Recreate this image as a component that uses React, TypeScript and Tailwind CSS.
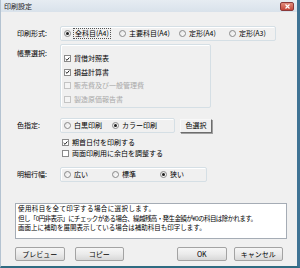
import React from "react";

type Opt = { label: string; w?: string; checked?: boolean; focus?: boolean };

function Radio({ checked }: { checked?: boolean }) {
  return (
    <span className="flex h-[7px] w-[7px] shrink-0 items-center justify-center rounded-full border border-[#8a8a8a] bg-gradient-to-br from-[#e4e4e4] to-white">
      {checked && <span className="h-[3px] w-[3px] rounded-full bg-[#1e1e1e]" />}
    </span>
  );
}

function Check({ checked, disabled }: { checked?: boolean; disabled?: boolean }) {
  return (
    <span
      className={
        "flex h-[7px] w-[7px] shrink-0 items-center justify-center border " +
        (disabled ? "border-[#c4c4c4] bg-[#f4f4f4]" : "border-[#8a8a8a] bg-white")
      }
    >
      {checked && (
        <svg width="6" height="6" viewBox="0 0 6 6">
          <path d="M0.8 3 L2.4 4.6 L5.2 1.2" stroke="#222" strokeWidth="1.2" fill="none" />
        </svg>
      )}
    </span>
  );
}

function RadioGroup({ opts, width }: { opts: Opt[]; width: string }) {
  return (
    <div className={"flex h-[15px] items-center rounded-[2px] border border-[#d5dfe5] pl-[3px] shadow-[inset_1px_1px_0_#fff] " + width}>
      {opts.map((o) => (
        <div key={o.label} className={"flex items-center gap-[3px] " + (o.w ?? "")}>
          <Radio checked={o.checked} />
          <span className={"leading-[9px] " + (o.focus ? "outline outline-1 outline-dotted outline-[#555] px-[1px]" : "")}>
            {o.label}
          </span>
        </div>
      ))}
    </div>
  );
}

function Btn({ children, className = "" }: { children: React.ReactNode; className?: string }) {
  return (
    <div
      className={
        "flex h-[14px] items-center justify-center rounded-[2px] border border-[#a3a3a3] bg-gradient-to-b from-[#f6f6f6] via-[#ebebeb] to-[#d8d8d8] " +
        className
      }
    >
      {children}
    </div>
  );
}

export default function App() {
  return (
    <div className="flex h-[268px] w-[300px] flex-col overflow-hidden border-b-[2px] border-l border-r-[3px] border-b-[#2f6b82] border-l-[#b4c3d1] border-r-[#3f7394] bg-[#f0f0f0] font-['Noto_Sans_CJK_JP',sans-serif] text-[7px] text-black">
      {/* title bar */}
      <div className="flex h-[12px] shrink-0 items-center justify-between bg-gradient-to-b from-[#e6ecf2] to-[#d9e2eb] pl-[3px] pr-[3px]">
        <span className="leading-[8px] text-[#222]">印刷設定</span>
        <div className="flex h-[9px] w-[14px] items-center justify-center rounded-[2px] border border-[#8a3a3a] bg-gradient-to-b from-[#e08a7a] to-[#c4453a]">
          <svg width="5" height="5" viewBox="0 0 5 5">
            <path d="M0.5 0.5 L4.5 4.5 M4.5 0.5 L0.5 4.5" stroke="#fff" strokeWidth="1.2" />
          </svg>
        </div>
      </div>

      <div className="flex flex-col px-[14px]">
        {/* 印刷形式 */}
        <div className="mt-[14px] flex items-center pl-[2px]">
          <span className="w-[43px] leading-[9px]">印刷形式:</span>
          <RadioGroup
            width="w-[216px]"
            opts={[
              { label: "全科目(A4)", w: "w-[55px]", checked: true, focus: true },
              { label: "主要科目(A4)", w: "w-[60px]" },
              { label: "定形(A4)", w: "w-[50px]" },
              { label: "定形(A3)" },
            ]}
          />
        </div>

        {/* 帳票選択 */}
        <div className="mt-[3px] flex pl-[2px]">
          <span className="w-[43px] pt-[5px] leading-[9px]">帳票選択:</span>
          <div className="flex h-[64px] w-[151px] flex-col rounded-[2px] border border-[#d5dfe5] pl-[3px] pt-[7px] shadow-[inset_1px_1px_0_#fff]">
            {[
              { t: "貸借対照表", c: true },
              { t: "損益計算書", c: true },
              { t: "販売費及び一般管理費", d: true },
              { t: "製造原価報告書", d: true },
            ].map((r) => (
              <div key={r.t} className="flex h-[13.5px] items-center gap-[3px]">
                <Check checked={r.c} disabled={r.d} />
                <span className={"leading-[9px] " + (r.d ? "text-[#a8a8a8]" : "")}>{r.t}</span>
              </div>
            ))}
          </div>
        </div>

        {/* 色指定 */}
        <div className="mt-[10px] flex items-center pl-[2px]">
          <span className="w-[43px] leading-[9px]">色指定:</span>
          <RadioGroup
            width="w-[115px]"
            opts={[
              { label: "白黒印刷", w: "w-[48px]" },
              { label: "カラー印刷", checked: true },
            ]}
          />
          <div className="ml-[5px] flex h-[14px] w-[32px] items-center justify-center border border-[#f8f8f8] border-b-[#6d6d6d] border-r-[#6d6d6d] bg-[#f0f0f0] shadow-[1px_1px_0_#a0a0a0]">
            色選択
          </div>
        </div>

        {/* checkboxes */}
        <div className="mt-[4px] flex flex-col pl-[47px]">
          <div className="flex h-[11px] items-center gap-[3px]">
            <Check checked />
            <span className="leading-[9px]">期首日付を印刷する</span>
          </div>
          <div className="flex h-[11px] items-center gap-[3px]">
            <Check />
            <span className="leading-[9px]">両面印刷用に余白を調整する</span>
          </div>
        </div>

        {/* 明細行幅 */}
        <div className="mt-[8px] flex items-center pl-[2px]">
          <span className="w-[43px] leading-[9px]">明細行幅:</span>
          <RadioGroup
            width="w-[147px]"
            opts={[
              { label: "広い", w: "w-[48px]" },
              { label: "標準", w: "w-[48px]" },
              { label: "狭い", checked: true },
            ]}
          />
        </div>

        {/* description */}
        <div className="mt-[21px] flex h-[36px] w-[272px] flex-col border border-[#a5acb5] bg-white pl-[2px] text-[6.5px] leading-[9.5px]">
          <div className="whitespace-nowrap tracking-[0.4px]">使用科目を全て印字する場合に選択します。</div>
          <div className="whitespace-nowrap tracking-[-0.6px]">但し「0円非表示」にチェックがある場合、繰越残高・発生金額が¥0の科目は除かれます。</div>
          <div className="whitespace-nowrap">画面上に補助を展開表示している場合は補助科目も印字します。</div>
        </div>

        {/* buttons */}
        <div className="mt-[8px] flex items-center">
          <Btn className="w-[50px]">プレビュー</Btn>
          <Btn className="ml-[10px] w-[50px]">コピー</Btn>
          <Btn className="ml-[53px] w-[50px]">OK</Btn>
          <Btn className="ml-[7px] w-[50px]">キャンセル</Btn>
        </div>
      </div>
    </div>
  );
}
